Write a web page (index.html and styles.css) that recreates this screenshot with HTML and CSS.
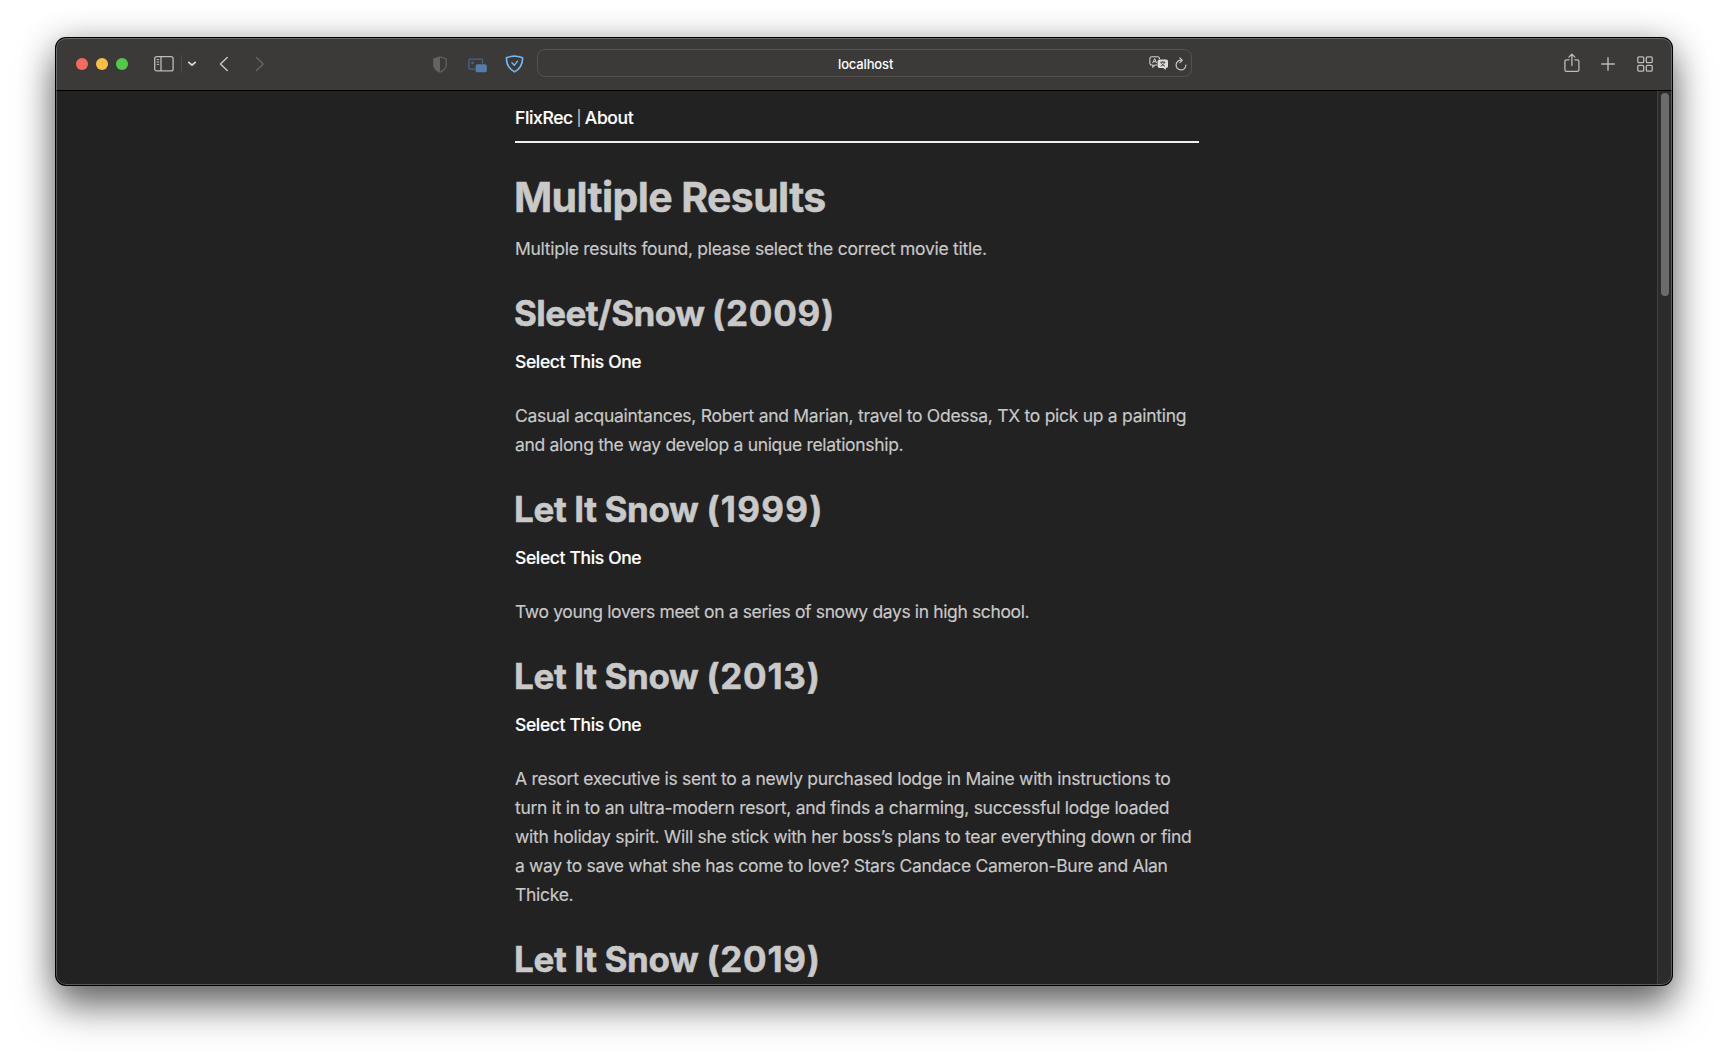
FILE: index.html
```html
<!DOCTYPE html>
<html lang="en">
<head>
<meta charset="utf-8">
<title>FlixRec</title>
<link rel="stylesheet" href="styles.css">
</head>
<body>
<div class="window">
  <header class="toolbar">
    <div class="lights"><i class="light close"></i><i class="light minimize"></i><i class="light zoom"></i></div>
    <svg class="icon sidebar" width="20" height="16" viewBox="0 0 20 16" fill="none" stroke="#bcbbba" stroke-width="1.3"><rect x=".7" y=".7" width="18.4" height="14.2" rx="2"/><path d="M7 .7v14.2"/><path d="M2.6 3.6h2.6M2.6 6h2.6M2.6 8.4h2.6" stroke-width="1"/></svg>
    <span class="divider"></span>
    <svg class="icon chevron" width="10" height="6" viewBox="0 0 10 6" fill="none" stroke="#dddcdb" stroke-width="1.7" stroke-linecap="round" stroke-linejoin="round"><path d="M1.8 1.3 5 4.2l3.200-2.900"/></svg>
    <svg class="icon back" width="10" height="16" viewBox="0 0 10 16" fill="none" stroke="#c4c3c2" stroke-width="1.5" stroke-linecap="round" stroke-linejoin="round"><path d="M8.200 1.500 1.500 8l6.700 6.500"/></svg>
    <svg class="icon forward" width="10" height="16" viewBox="0 0 10 16" fill="none" stroke="#656462" stroke-width="1.500" stroke-linecap="round" stroke-linejoin="round"><path d="m1.500 1.500 6.700 6.500-6.700 6.500"/></svg>
    <svg class="icon privacy" width="14" height="17" viewBox="0 0 14 17"><path d="M7 .8 13.200 3v6.200c0 3.200-2.600 5.400-6.200 7-3.600-1.600-6.200-3.800-6.200-7V3z" fill="none" stroke="#646361" stroke-width="1.200"/><path d="M7 .8v15.400C3.400 14.600.8 12.400.8 9.200V3z" fill="#646361"/></svg>
    <svg class="icon picture" width="20" height="15" viewBox="0 0 20 15"><path d="M7 11.200H2.400A1.500 1.500 0 0 1 .9 9.700V2.600a1.500 1.500 0 0 1 1.500-1.500h10.700a1.500 1.500 0 0 1 1.500 1.500V5.500" fill="none" stroke="#48648a" stroke-width="1.300"/><circle cx="4.600" cy="4.800" r="1.400" fill="#48648a"/><rect x="7.600" y="6.300" width="11.200" height="8" rx="1.600" fill="#557ba9"/></svg>
    <svg class="icon guard" width="19" height="18" viewBox="0 0 20 19" fill="none" stroke="#74b7f6" stroke-width="1.700" stroke-linejoin="round" stroke-linecap="round"><path d="M10 1C7.500 1.300 4 1.900 1.500 3c-.2 6.800 2.300 11.400 8.500 14.800 6.200-3.400 8.700-8 8.500-14.800C16 1.900 12.500 1.300 10 1z"/><path d="m7.300 8.300 2.500 2.600L13.200 6.500" stroke-width="1.500"/></svg>
    <div class="address">
      <span class="host">localhost</span>
      <svg class="translate" width="20" height="15" viewBox="0 0 20 15"><path d="M8.200 9H6L3.800 11V9H2.600A1.700 1.700 0 0 1 .9 7.300V2.500A1.700 1.700 0 0 1 2.600.8h6.200a1.700 1.700 0 0 1 1.700 1.700V3" fill="none" stroke="#cfcecd" stroke-width="1.100"/><path d="M3.600 7.200 5.700 2.500 7.600 7.200M4.300 5.700h2.700" fill="none" stroke="#cfcecd"/><path d="M10.300 3.500h7a1.700 1.700 0 0 1 1.700 1.700v5a1.700 1.700 0 0 1-1.700 1.700h-.6v2.200l-2.400-2.200h-4a1.700 1.700 0 0 1-1.700-1.700v-5a1.700 1.700 0 0 1 1.700-1.700z" fill="#dddcdb"/><path d="M11.200 6.200h5.200M13.800 5v1.200M12.200 6.500c.6 1.800 2 3 3.800 3.700M15.400 6.500c-.5 1.800-2 3-3.800 3.700" fill="none" stroke="#3b3a38" stroke-width=".9"/></svg>
      <svg class="reload" width="12" height="14" viewBox="0 0 12 14" fill="none" stroke="#c9c8c7" stroke-width="1.200" stroke-linecap="round" stroke-linejoin="round"><path d="M6.600 3.200A4.900 4.900 0 1 0 10.900 8"/><path d="M4.800.8 7.300 3.300 4.900 5.700"/></svg>
    </div>
    <svg class="icon share" width="16" height="20" viewBox="0 0 16 20" fill="none" stroke="#bcbbba" stroke-width="1.300" stroke-linecap="round" stroke-linejoin="round"><path d="M5 6.800H2.500A1.600 1.600 0 0 0 .9 8.400v8.400a1.600 1.600 0 0 0 1.600 1.600h10.800a1.600 1.600 0 0 0 1.600-1.600V8.400a1.600 1.600 0 0 0-1.600-1.600H10.800M7.900 12.500V1.300M4.900 4.100l3-3 3 3"/></svg>
    <svg class="icon plus" width="14" height="14" viewBox="0 0 14 14" fill="none" stroke="#bcbbba" stroke-width="1.400" stroke-linecap="round"><path d="M7 .7v12.600M.7 7h12.600"/></svg>
    <svg class="icon tabs" width="16" height="16" viewBox="0 0 16 16" fill="none" stroke="#bcbbba" stroke-width="1.300"><rect x=".8" y=".8" width="5.900" height="5.900" rx="1.200"/><rect x="9.300" y=".8" width="5.900" height="5.900" rx="1.200"/><rect x=".8" y="9.300" width="5.900" height="5.900" rx="1.200"/><rect x="9.300" y="9.300" width="5.900" height="5.900" rx="1.200"/></svg>
  </header>
  <div class="viewport">
    <main class="page">
      <nav class="nav"><a>FlixRec</a><span class="pipe">|</span><a>About</a></nav>
      <h1>Multiple Results</h1>
      <p class="intro">Multiple results found, please select the correct movie title.</p>
      <h2>Sleet/Snow <span class="year">(2009)</span></h2>
      <a class="select">Select This One</a>
      <p>Casual acquaintances, Robert and Marian, travel to Odessa, TX to pick up a painting<br><span class="snug">and along the way develop a unique relationship.</span></p>
      <h2 class="loose">Let It Snow <span class="year wide">(1999)</span></h2>
      <a class="select">Select This One</a>
      <p class="tight">Two young lovers meet on a series of snowy days in high school.</p>
      <h2 class="loose">Let It Snow <span class="year">(2013)</span></h2>
      <a class="select">Select This One</a>
      <p>A resort executive is sent to a newly purchased lodge in Maine with instructions to<br>turn it in to an ultra-modern resort, and finds a charming, successful lodge loaded<br>with holiday spirit. Will she stick with her boss’s plans to tear everything down or find<br><span class="snug">a way to save what she has come to love? Stars Candace Cameron-Bure and Alan</span><br>Thicke.</p>
      <h2 class="loose">Let It Snow <span class="year">(2019)</span></h2>
    </main>
    <div class="scrollbar"><div class="thumb"></div></div>
  </div>
</div>
</body>
</html>
```
FILE: styles.css
```css
* { box-sizing: border-box; }
body {
  margin: 0;
  height: 1059px;
  padding: 38px 56px 0;
  background: #fff;
  font-family: Inter, "Liberation Sans", sans-serif;
  overflow: hidden;
}
.window {
  position: relative;
  display: flex;
  flex-direction: column;
  width: 1616px;
  height: 947px;
  border-radius: 10px;
  overflow: hidden;
  background: #222;
  box-shadow: 0 0 0 1px #000, 0 22px 38px rgba(0, 0, 0, .5), 0 4px 34px rgba(0, 0, 0, .3);
}
/* light rim drawn over the window's edge */
.window::after {
  content: "";
  position: absolute;
  inset: 0;
  border: 1px solid rgba(255, 255, 255, .24);
  border-radius: 10px;
  pointer-events: none;
}
.toolbar {
  display: flex;
  align-items: center;
  flex: none;
  height: 53px;
  padding: 0 19.5px 0 20px;
  background: #3b3a38;
  border-bottom: 1px solid #000;
}
.toolbar svg { display: block; flex: none; }
.lights { display: flex; gap: 8px; }
.light { width: 12px; height: 12px; border-radius: 50%; }
.close { background: #f46a5e; }
.minimize { background: #f8bf45; }
.zoom { background: #54c84b; }
.sidebar { margin-left: 26px; }
.divider { width: 1px; height: 18px; margin-left: 7px; background: #4c4b49; }
.chevron { margin: 0 0 0 5px; }
.back { margin: 0 0 1px 22px; }
.forward { margin: 0 0 1px 26px; }
.privacy { margin-left: 168px; }
.picture { margin: 2px 0 0 21px; }
.guard { margin: 0 0 1px 17px; }
.address {
  display: flex;
  align-items: center;
  width: 655px;
  height: 28px;
  margin: 0 0 2px 13px;
  padding-right: 4px;
  border: 1px solid #53524f;
  border-radius: 8px;
}
.host { margin: 2px 0 0 300px; font-size: 13px; font-weight: 500; letter-spacing: -.15px; color: #fff; }
.translate { margin: 1px 0 0 auto; }
.reload { margin: 1px 0 0 6px; }
.share { margin: 0 0 3px auto; }
.plus { margin: 0 0 1px 21px; }
.tabs { margin: 0 0 1px 22px; }

.viewport { display: flex; flex: 1; min-height: 0; }
.page {
  width: 684px;
  margin-left: 459px;
  padding-top: 12px;
  font-size: 17.5px;
  line-height: 29.12px;
  letter-spacing: -.28px;
  color: #c9c9c9;
  white-space: nowrap;
  -webkit-text-stroke: .15px currentColor;
}
.page a { color: #fff; font-weight: 500; letter-spacing: -.36px; }
.nav { display: flex; height: 40px; border-bottom: 2px solid #f0f0f0; }
.pipe { width: 12px; text-align: center; font-size: 15px; }
h1, h2 { font-weight: 700; text-indent: -1px; -webkit-text-stroke: .5px currentColor; }
h1 { margin: 31px 0 14px; font-size: 41px; line-height: 46px; letter-spacing: -.61px; }
h2 { margin: 30.7px 0 13.4px; font-size: 35px; line-height: 39.6px; letter-spacing: -.56px; }
.loose { letter-spacing: -.38px; }
.year { letter-spacing: .75px; }
.year.wide { letter-spacing: 1.3px; }
.page p { margin: 0 0 30.7px; }
.page .intro { letter-spacing: -.27px; }
.select { display: block; margin-bottom: 25px; }
.page .snug { letter-spacing: -.32px; }
.page .tight { letter-spacing: -.37px; }

.scrollbar {
  display: flex;
  justify-content: center;
  width: 15px;
  margin-left: auto;
  padding-top: 2px;
  background: #2c2c2c;
  border-left: 1px solid #414141;
}
.thumb { width: 8px; height: 203px; border-radius: 4px; background: #6c6c6c; }
```
